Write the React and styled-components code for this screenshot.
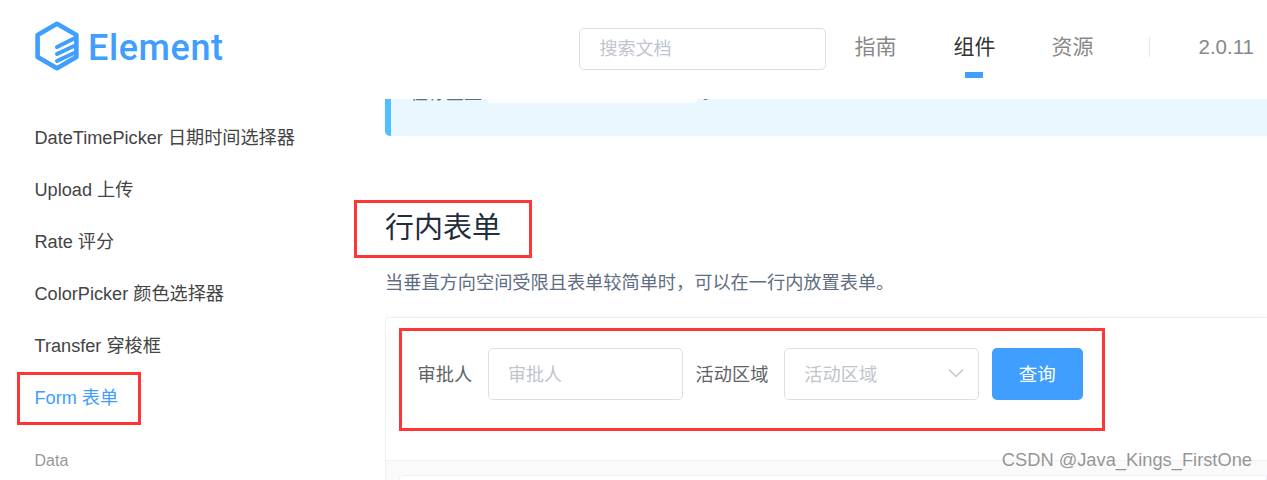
import React from 'react'
import styled, {createGlobalStyle} from 'styled-components'

const sideNavItems = ['DateTimePicker 日期时间选择器', 'Upload 上传', 'Rate 评分', 'ColorPicker 颜色选择器', 'Transfer 穿梭框']

const GlobalStyle = createGlobalStyle`
    html, body {
        margin: 0;
        padding: 0;
        background: #fff;
    }
    body {
        font-family: "Liberation Sans", "Noto Sans CJK SC", sans-serif;
    }
    * {
        box-sizing: border-box;
    }
`

const Page = styled.div`
    position: relative;
    width: 1267px;
    height: 480px;
    overflow: hidden;
    background: #fff;
`

const Header = styled.header`
    position: relative;
    z-index: 2;
    height: 99px;
    display: flex;
    align-items: center;
    padding: 0 13px 0 34px;
    background: #fff;
`

const Logo = styled.div`
    display: flex;
    align-items: center;
    gap: 8px;
    margin-top: -8px;
    color: #409eff;
`

const LogoText = styled.span`
    margin-top: 4px;
    font-family: "Roboto", sans-serif;
    font-weight: 500;
    font-size: 36px;
    line-height: 40px;
    letter-spacing: 0.6px;
`

const Search = styled.input`
    width: 247px;
    height: 42px;
    margin-left: auto;
    margin-bottom: 1px;
    padding: 0 20px;
    border: 1px solid #dcdfe6;
    border-radius: 5px;
    font: inherit;
    font-size: 18px;
    outline: none;
    &::placeholder {
        color: #c0c4cc;
        opacity: 1;
    }
`

const Nav = styled.nav`
    display: flex;
    align-items: center;
    margin-left: 29px;
    margin-bottom: 5px;
`

const NavLink = styled.a`
    position: relative;
    width: 42px;
    margin-right: ${props => props.$first ? 57 : 56}px;
    font-size: 21px;
    line-height: 28px;
    white-space: nowrap;
    color: ${props => props.$active ? '#333' : '#888'};
    &::after {
        content: '';
        display: ${props => props.$active ? 'block' : 'none'};
        position: absolute;
        left: 11px;
        bottom: -17px;
        width: 18px;
        height: 6px;
        background: #409eff;
    }
`

const NavDivider = styled.span`
    width: 1px;
    height: 20px;
    margin-left: -1px;
    background: #e6e6e6;
`

const Version = styled.span`
    margin-left: 49px;
    font-size: 20.5px;
    color: #888;
`

const Body = styled.div`
    display: flex;
    height: 381px;
`

const Sidebar = styled.aside`
    flex: 0 0 385px;
    padding: 13px 0 0 34.5px;
`

const SideItem = styled.div`
    height: 52px;
    line-height: 52px;
    font-size: 18.15px;
    white-space: nowrap;
    color: ${props => props.$active ? '#409eff' : '#444'};
`

const SideGroup = styled.div`
    margin-top: 21px;
    height: 32px;
    line-height: 32px;
    font-size: 16px;
    color: #999;
`

const Main = styled.main`
    flex: 1;
    min-width: 0;
    overflow: hidden;
`

const Tip = styled.div`
    margin-top: -30px;
    height: 67px;
    padding: 12px 0 0 19px;
    border-left: 6px solid #50bfff;
    border-radius: 5px 0 0 5px;
    background: #eaf7ff;
    font-size: 18px;
    line-height: 24px;
    color: #5e6d82;
    white-space: nowrap;
`

const TipCode = styled.code`
    display: inline-block;
    margin: 0 5px;
    padding: 0 6px;
    border-radius: 4px;
    background: #fbfdff;
    vertical-align: 3px;
    font-family: "Liberation Mono", monospace;
    font-size: 15px;
    line-height: 20px;
    color: #445368;
`

const Title = styled.h3`
    margin: 72px 0 0;
    font-weight: 400;
    font-size: 29px;
    line-height: 40px;
    color: #1f2d3d;
`

const Description = styled.p`
    margin: 21px 0 20px;
    font-size: 18.2px;
    line-height: 28px;
    color: #5e6d82;
`

const DemoCard = styled.div`
    border: 1px solid #f0f1f6;
    border-right: 0;
    border-radius: 4px 0 0 0;
    box-shadow: 0 0 4px rgba(232, 237, 250, 0.6);
`

const InlineForm = styled.div`
    display: flex;
    align-items: center;
    height: 142px;
    padding: 0 0 30px 32px;
`

const FormLabel = styled.label`
    margin-right: 16px;
    margin-left: -0.5px;
    padding-bottom: 2px;
    font-size: 18.2px;
    color: #606266;
`

const TextBox = styled.input`
    width: 195px;
    height: 52px;
    margin-right: 13px;
    padding: 2px 19px 0;
    border: 1px solid #dcdfe6;
    border-radius: 5px;
    font: inherit;
    font-size: 18px;
    outline: none;
    &::placeholder {
        color: #c0c4cc;
        opacity: 1;
    }
`

const SelectBox = styled.div`
    display: flex;
    align-items: center;
    justify-content: space-between;
    width: 195px;
    height: 52px;
    margin-right: 13px;
    padding: 0 14px 2px 19px;
    border: 1px solid #dcdfe6;
    border-radius: 5px;
    font-size: 18.2px;
    color: #c0c4cc;
`

const SubmitButton = styled.button`
    width: 91px;
    height: 52px;
    padding: 0 1px 2px 0;
    border: 0;
    border-radius: 5px;
    background: #409eff;
    font: inherit;
    font-size: 18.5px;
    color: #fff;
`

const CodeArea = styled.div`
    height: 30px;
    padding: 14px 0 0 13px;
    border-top: 1px solid #f0f1f6;
    background: #fafafa;
`

const CodeBlock = styled.div`
    height: 30px;
    border: 1px solid #f0f1f6;
    border-radius: 4px 0 0 0;
    background: #fff;
`

const Marker = styled.div`
    position: absolute;
    z-index: 3;
    left: ${props => props.$x}px;
    top: ${props => props.$y}px;
    width: ${props => props.$w}px;
    height: ${props => props.$h}px;
    border: 3px solid #ff3636;
    pointer-events: none;
`

const Watermark = styled.div`
    position: absolute;
    z-index: 4;
    right: 15px;
    top: 449px;
    font-family: "Liberation Sans", sans-serif;
    font-size: 18.3px;
    line-height: 22px;
    color: rgba(130, 130, 130, 0.85);
    white-space: nowrap;
`

function LogoMark() {
    return (
        <svg width="46" height="50" viewBox="0 0 46 50" fill="none">
            <path d="M23 2.8 L42.4 13.9 V36.1 L23 47.2 L3.6 36.1 V13.9 Z" stroke="#409eff" strokeWidth="4.6" strokeLinejoin="round"/>
            <path d="M23 26 L40 17.5 M23 33 L40 25 M23 40 L40 32" stroke="#409eff" strokeWidth="4" strokeLinecap="round"/>
        </svg>
    )
}

function Chevron() {
    return (
        <svg width="16" height="10" viewBox="0 0 16 10" fill="none">
            <path d="M1 1.5 L8 8.5 L15 1.5" stroke="#c0c4cc" strokeWidth="1.3"/>
        </svg>
    )
}

export default function App() {
    return (
        <Page>
            <GlobalStyle/>
            <Header>
                <Logo>
                    <LogoMark/>
                    <LogoText>Element</LogoText>
                </Logo>
                <Search placeholder="搜索文档" readOnly/>
                <Nav>
                    <NavLink $first>指南</NavLink>
                    <NavLink $active>组件</NavLink>
                    <NavLink>资源</NavLink>
                    <NavDivider/>
                    <Version>2.0.11</Version>
                </Nav>
            </Header>
            <Body>
                <Sidebar>
                    {sideNavItems.map(item => <SideItem key={item}>{item}</SideItem>)}
                    <SideItem $active>Form 表单</SideItem>
                    <SideGroup>Data</SideGroup>
                </Sidebar>
                <Main>
                    <Tip>
                        在标签上<TipCode>@submit.native.prevent</TipCode>。
                    </Tip>
                    <Title>行内表单</Title>
                    <Description>当垂直方向空间受限且表单较简单时，可以在一行内放置表单。</Description>
                    <DemoCard>
                        <InlineForm>
                            <FormLabel>审批人</FormLabel>
                            <TextBox placeholder="审批人" readOnly/>
                            <FormLabel>活动区域</FormLabel>
                            <SelectBox>活动区域<Chevron/></SelectBox>
                            <SubmitButton>查询</SubmitButton>
                        </InlineForm>
                        <CodeArea>
                            <CodeBlock/>
                        </CodeArea>
                    </DemoCard>
                </Main>
            </Body>
            <Marker $x={354} $y={200} $w={178} $h={58}/>
            <Marker $x={17} $y={372} $w={124} $h={53}/>
            <Marker $x={399} $y={328} $w={706} $h={103}/>
            <Watermark>CSDN @Java_Kings_FirstOne</Watermark>
        </Page>
    )
}
